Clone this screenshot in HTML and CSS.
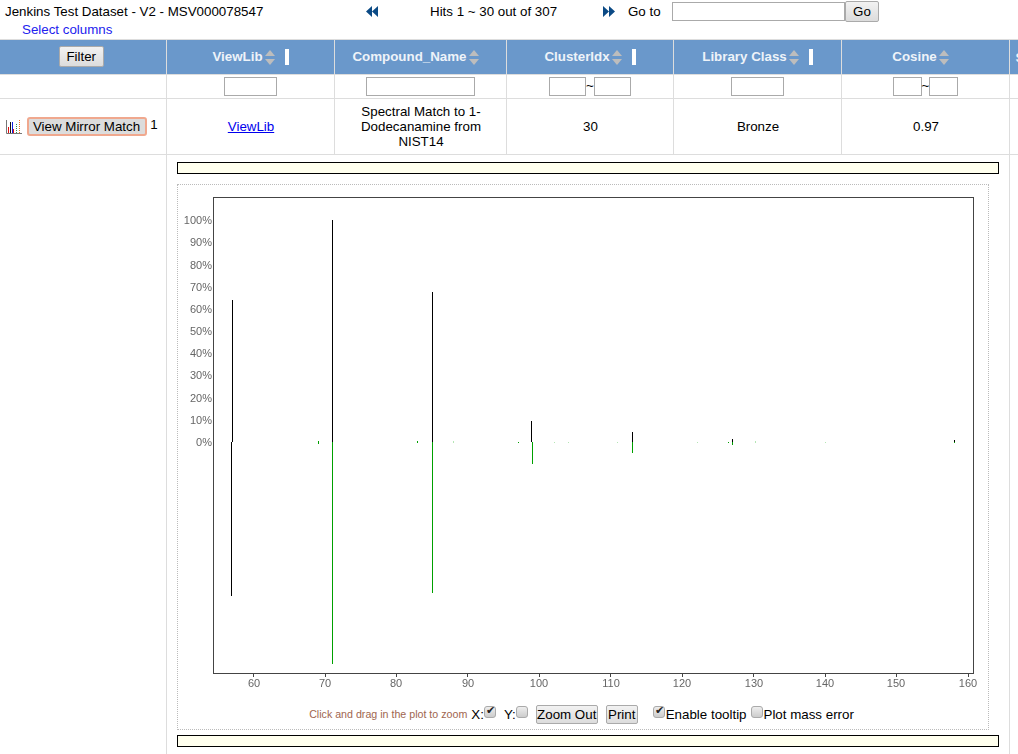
FILE: index.html
```html
<!DOCTYPE html>
<html lang="en">
<head>
    <meta charset="UTF-8">
    <title>ViewLib results</title>
    <link rel="stylesheet" href="styles.css">
</head>
<body>
    <div class="top-bar">
        <div>Jenkins Test Dataset - V2 - MSV000078547</div>
        <div>
            <svg class="page-arrow" width="12" height="11" viewBox="0 0 12 11"><path d="M0 5.5L6 0V11ZM6 5.5L12 0V11Z"/></svg>
        </div>
        <div>Hits 1 ~ 30 out of 307</div>
        <div>
            <svg class="page-arrow" width="12" height="11" viewBox="0 0 12 11"><path d="M0 0L6 5.5L0 11ZM6 0L12 5.5L6 11Z"/></svg>
        </div>
        <div>Go to</div>
        <div class="goto">
            <input type="text" class="goto-input">
            <button class="btn goto-btn">Go</button>
        </div>
    </div>
    <div class="select-columns">Select columns</div>

    <table class="results">
        <colgroup>
            <col class="col-first">
            <col class="col-viewlib">
            <col class="col-name">
            <col class="col-cluster">
            <col class="col-class">
            <col class="col-cosine">
            <col class="col-next">
        </colgroup>
        <thead>
            <tr>
                <th><button class="btn filter-btn">Filter</button></th>
                <th>ViewLib<span class="sort"></span><span class="bar"></span></th>
                <th>Compound_Name<span class="sort"></span><span class="no-bar"></span></th>
                <th>ClusterIdx<span class="sort"></span><span class="bar"></span></th>
                <th>Library Class<span class="sort"></span><span class="bar"></span></th>
                <th>Cosine<span class="sort"></span><span class="no-bar"></span></th>
                <th class="next-head">S</th>
            </tr>
        </thead>
        <tbody>
            <tr class="filter-row">
                <td></td>
                <td><input type="text" class="filter-input w-53"></td>
                <td><input type="text" class="filter-input w-109"></td>
                <td class="range-cell"><input type="text" class="filter-input w-37"><span class="tilde">~</span><input type="text" class="filter-input w-37"></td>
                <td><input type="text" class="filter-input w-53"></td>
                <td class="range-cell"><input type="text" class="filter-input w-29">~<input type="text" class="filter-input w-29"></td>
                <td></td>
            </tr>
            <tr class="data-row">
                <td class="first-cell">
                    <svg class="mini-chart" width="17" height="16" viewBox="0 0 17 16">
                        <path d="M0.5 1V14.5H16" fill="none" stroke="#777"/>
                        <path d="M2.5 14V8" stroke="#e01010"/>
                        <path d="M4.5 14V3" stroke="#111"/>
                        <path d="M6.5 14V3" stroke="#1020e0"/>
                        <path d="M7.5 14V10" stroke="#e01010"/>
                        <path d="M10.5 14V4" stroke="#2f8f4f" stroke-dasharray="1 1"/>
                        <path d="M13.5 14V1" stroke="#ee7020" stroke-dasharray="1 1"/>
                    </svg>
                    <button class="btn mirror-btn">View Mirror Match</button>
                    <span class="row-num">1</span>
                </td>
                <td><a href="#" class="lib-link">ViewLib</a></td>
                <td class="name-cell">Spectral Match to 1-Dodecanamine from NIST14</td>
                <td>30</td>
                <td>Bronze</td>
                <td>0.97</td>
                <td></td>
            </tr>
            <tr class="detail-row">
                <td></td>
                <td colspan="5" class="detail-cell">
                    <div class="note-bar"></div>
                    <div class="plot-box">
                        <svg class="plot" width="809" height="513" viewBox="178 185 809 513">
                            <g class="y-labels">
                                <text x="212" y="224">100%</text>
                                <text x="212" y="246">90%</text>
                                <text x="212" y="269">80%</text>
                                <text x="212" y="291">70%</text>
                                <text x="212" y="313">60%</text>
                                <text x="212" y="335">50%</text>
                                <text x="212" y="357">40%</text>
                                <text x="212" y="379">30%</text>
                                <text x="212" y="402">20%</text>
                                <text x="212" y="424">10%</text>
                                <text x="212" y="446">0%</text>
                            </g>
                            <g class="x-labels">
                                <text x="254" y="687">60</text>
                                <text x="325" y="687">70</text>
                                <text x="396" y="687">80</text>
                                <text x="468" y="687">90</text>
                                <text x="539" y="687">100</text>
                                <text x="611" y="687">110</text>
                                <text x="682" y="687">120</text>
                                <text x="754" y="687">130</text>
                                <text x="825" y="687">140</text>
                                <text x="896" y="687">150</text>
                                <text x="968" y="687">160</text>
                            </g>
                            <path class="ticks" d="M253.5 673V677M325.5 673V677M396.5 673V677M467.5 673V677M539.5 673V677M610.5 673V677M682.5 673V677M753.5 673V677M825.5 673V677M896.5 673V677M968.5 673V677"/>
                            <rect class="frame" x="213.5" y="197.5" width="760" height="476"/>
                            <path class="peak-up" d="M232.5 300V442M332.5 220V442M432.5 292V442M531.5 421V442M632.5 432V442M732.5 439V442M954.5 440V442"/>
                            <path class="peak-up" d="M231.5 442V596"/>
                            <path class="peak-down" d="M332.5 442V664M432.5 442V593M532.5 442V464M632.5 442V453M732.5 442V445M954.5 442V443M318.5 441V444M417.5 441V443M518.5 442V443M728.5 442V443"/>
                            <path class="peak-faint" d="M453.5 441V443M554.5 442V443M568.5 442V443M617.5 442V443M697.5 442V443M755.5 441V443M825.5 442V443"/>
                        </svg>
                        <div class="plot-controls">
                            <span class="hint">Click and drag in the plot to zoom</span>
                            X:<input type="checkbox" class="chk" checked>
                            <span class="y-label">Y:</span><input type="checkbox" class="chk">
                            <button class="btn zoom-btn">Zoom Out</button>
                            <button class="btn print-btn">Print</button>
                            <span class="tooltip-opt"><input type="checkbox" class="chk chk-label" checked>Enable tooltip</span>
                            <input type="checkbox" class="chk chk-label">Plot mass error
                        </div>
                    </div>
                    <div class="note-bar"></div>
                </td>
                <td></td>
            </tr>
        </tbody>
    </table>
</body>
</html>
```

FILE: styles.css
```css
* {
    box-sizing: border-box;
}
html, body {
    margin: 0;
    height: 754px;
    overflow: hidden;
}
body {
    font-family: "Liberation Sans", Arial, sans-serif;
    font-size: 13.33px;
    color: #000;
    background: #fff;
}
.top-bar {
    display: grid;
    grid-template-columns: 361px 64px 173px 25px 44px auto;
    align-items: center;
    height: 22px;
    padding-left: 5px;
}
.page-arrow {
    display: block;
    fill: #0b4a85;
}
.goto {
    display: flex;
}
.goto-input {
    width: 173px;
    height: 19px;
    border: 1px solid #aaa;
    padding: 0;
    margin-top: 1px;
    background: #fff;
}
.btn {
    font-family: "Liberation Sans", Arial, sans-serif;
    font-size: 13.33px;
    color: #000;
    padding: 0;
    border: 1px solid #aaa;
    border-radius: 2px;
    background: linear-gradient(#f2f2f2, #dcdcdc);
}
.goto-btn {
    width: 34px;
    height: 21px;
}
.select-columns {
    height: 17px;
    padding-left: 22px;
    line-height: 15px;
    color: #2222ee;
}

.results {
    width: 1109px;
    margin-left: -1px;
    table-layout: fixed;
    border-collapse: collapse;
}
.col-first { width: 166.5px; }
.col-viewlib { width: 168px; }
.col-name { width: 172px; }
.col-cluster { width: 167px; }
.col-class { width: 168px; }
.col-cosine { width: 168px; }
.col-next { width: 100px; }

th, td {
    border: 1px solid #ddd;
    padding: 0;
    text-align: center;
    vertical-align: middle;
}
th {
    height: 35px;
    padding-left: 1px;
    background: #6a98cb;
    color: #eef3f9;
    font-size: 13.33px;
    white-space: nowrap;
}
.next-head {
    text-align: left;
    padding-left: 6px;
}
.sort {
    display: inline-block;
    position: relative;
    width: 11px;
    height: 15px;
    margin-left: 2px;
    vertical-align: middle;
}
.sort::before, .sort::after {
    content: "";
    position: absolute;
    left: 0;
    border-left: 5.5px solid transparent;
    border-right: 5.5px solid transparent;
}
.sort::before {
    top: 0;
    border-bottom: 6px solid #bdbdbd;
}
.sort::after {
    bottom: 0;
    border-top: 6px solid #bdbdbd;
}
.bar {
    display: inline-block;
    width: 4px;
    height: 16px;
    margin-left: 9px;
    background: #fff;
    vertical-align: middle;
}
.no-bar {
    display: inline-block;
    width: 9px;
}
.filter-btn {
    width: 45px;
    height: 21px;
    margin: 0 4px 2px 0;
}
.filter-row td {
    height: 24px;
}
.filter-row .range-cell {
    padding-left: 1px;
}
.tilde {
    display: inline-block;
    width: 8px;
}
.filter-input {
    height: 19px;
    padding: 0;
    border: 1px solid #aaa;
    background: #fff;
    vertical-align: middle;
}
.w-29 { width: 29px; }
.w-37 { width: 37px; }
.w-53 { width: 53px; }
.w-109 { width: 109px; }

.data-row td {
    height: 56px;
    padding: 0 0 0 2px;
    line-height: 15px;
}
.data-row .name-cell {
    padding: 0 24px 0 26px;
}
.data-row .first-cell {
    padding: 0 2px 0 0;
    white-space: nowrap;
}
.mini-chart {
    vertical-align: middle;
}
.mirror-btn {
    width: 120px;
    height: 19px;
    border: 2px solid #f0a88e;
    border-radius: 3px;
    background: #dcdcdc;
    vertical-align: middle;
}
.row-num {
    position: relative;
    top: -1px;
}
.lib-link {
    color: #0000ee;
}

.detail-cell {
    padding: 7px 10px 7px 10px;
}
.note-bar {
    height: 12px;
    border: 1px solid #000;
    background: #ffffee;
}
.plot-box {
    width: 812px;
    height: 546px;
    margin: 10px 0 5px;
    border: 1px dotted #bbb;
}
.plot {
    display: block;
    will-change: transform;
}
.y-labels text {
    font-size: 11px;
    fill: #666;
    text-anchor: end;
}
.x-labels text {
    font-size: 11px;
    fill: #666;
    text-anchor: middle;
}
.ticks, .frame {
    stroke: #444;
    fill: none;
}
.peak-up {
    stroke: #000;
}
.peak-down {
    stroke: #00a000;
}
.peak-faint {
    stroke: #b5e6b5;
}
.plot-controls {
    display: flex;
    align-items: center;
    justify-content: center;
    height: 24px;
    margin-top: 4px;
    padding-right: 2px;
    white-space: nowrap;
}
.hint {
    font-size: 10.67px;
    color: #a0664f;
    margin-right: 4px;
}
.chk {
    appearance: none;
    position: relative;
    top: -2px;
    width: 12px;
    height: 12px;
    margin: 0;
    border: 1px solid #aaa;
    border-radius: 3px;
    background: linear-gradient(#eee, #ccc);
}
.chk:checked::after {
    content: "\2714";
    position: absolute;
    left: 1px;
    top: -3px;
    font-size: 11px;
    color: #222;
}
.chk-label {
    margin-right: 1px;
}
.y-label {
    margin-left: 8px;
}
.zoom-btn {
    width: 62px;
    height: 19px;
    margin-left: 8px;
}
.print-btn {
    width: 32px;
    height: 19px;
    margin-left: 8px;
}
.tooltip-opt {
    display: flex;
    align-items: center;
    margin: 0 4px 0 15px;
}
```
